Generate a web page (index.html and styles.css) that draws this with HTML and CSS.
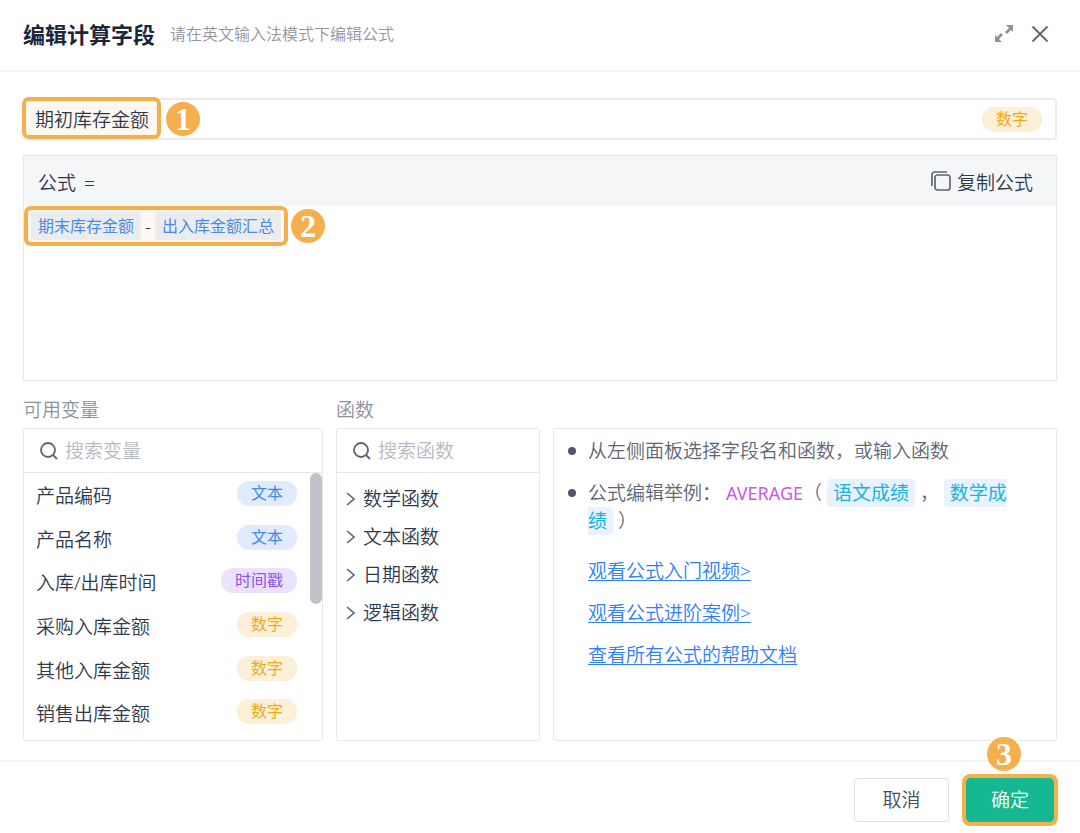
FILE: index.html
```html
<!doctype html>
<html lang="zh-CN">
  <head>
    <meta charset="UTF-8" />
    <meta name="viewport" content="width=device-width, initial-scale=1" />
    <title>编辑计算字段</title>
    <link rel="stylesheet" href="styles.css">
  </head>
  <body>
    <header class="header">
      <h1>编辑计算字段</h1>
      <p class="subtitle">请在英文输入法模式下编辑公式</p>
      <div class="header-actions">
        <button type="button" class="icon-btn" aria-label="全屏">
          <svg width="18" height="18" viewBox="0 0 18 18">
            <path d="M11 0h7v7l-2-2-4 4-2-2 4-4z" fill="#8d919b" />
            <path d="M7 17H0v-7l2 2 4-4 2 2-4 4z" fill="#8d919b" />
          </svg>
        </button>
        <button type="button" class="icon-btn" aria-label="关闭">
          <svg width="18" height="18" viewBox="0 0 18 18">
            <path d="M1.500 1.500l15 15M16.500 1.500l-15 15" fill="none" stroke="#5f6575" stroke-width="1.800" />
          </svg>
        </button>
      </div>
    </header>

    <main class="content">
      <div class="name-field">
        <span class="name-highlight"></span>
        <input type="text" id="field-name" class="name-input" value="期初库存金额" aria-label="字段名称" />
        <span class="badge badge-name">1</span>
        <span class="tag tag-number">数字</span>
      </div>

      <section class="formula">
        <div class="formula-head">
          <div class="formula-label"><span>公式</span><span>=</span></div>
          <button type="button" class="copy-btn">
            <svg width="20" height="20" viewBox="0 0 20 20" fill="none" stroke="#5f6575" stroke-width="1.700">
              <rect x="4" y="4" width="15" height="15" rx="2.500" />
              <path d="M1 15V3.500A2.500 2.500 0 0 1 3.500 1H16" />
            </svg>
            复制公式
          </button>
        </div>
        <div class="formula-body">
          <div class="expression">
            <span class="token">期末库存金额</span>
            <span class="operator">-</span>
            <span class="token">出入库金额汇总</span>
          </div>
          <span class="badge">2</span>
        </div>
      </section>

      <div class="columns">
        <section class="column">
          <label class="column-title" for="search-var">可用变量</label>
          <div class="panel">
            <div class="search">
              <svg width="18" height="18" viewBox="0 0 18 18" fill="none" stroke="#5f6575" stroke-width="1.800">
                <circle cx="8" cy="8" r="7" />
                <path d="M13 13l4 4" />
              </svg>
              <input type="text" id="search-var" placeholder="搜索变量" />
            </div>
            <ul class="var-list">
              <li>产品编码 <span class="tag tag-text">文本</span></li>
              <li>产品名称 <span class="tag tag-text">文本</span></li>
              <li>入库/出库时间 <span class="tag tag-time">时间戳</span></li>
              <li>采购入库金额 <span class="tag tag-number">数字</span></li>
              <li>其他入库金额 <span class="tag tag-number">数字</span></li>
              <li>销售出库金额 <span class="tag tag-number">数字</span></li>
            </ul>
          </div>
        </section>

        <section class="column">
          <label class="column-title" for="search-fn">函数</label>
          <div class="panel">
            <div class="search">
              <svg width="18" height="18" viewBox="0 0 18 18" fill="none" stroke="#5f6575" stroke-width="1.800">
                <circle cx="8" cy="8" r="7" />
                <path d="M13 13l4 4" />
              </svg>
              <input type="text" id="search-fn" placeholder="搜索函数" />
            </div>
            <ul class="fn-list">
              <li><svg width="9" height="14" viewBox="0 0 9 14"><path d="M1 1l7 6-7 6" /></svg>数学函数</li>
              <li><svg width="9" height="14" viewBox="0 0 9 14"><path d="M1 1l7 6-7 6" /></svg>文本函数</li>
              <li><svg width="9" height="14" viewBox="0 0 9 14"><path d="M1 1l7 6-7 6" /></svg>日期函数</li>
              <li><svg width="9" height="14" viewBox="0 0 9 14"><path d="M1 1l7 6-7 6" /></svg>逻辑函数</li>
            </ul>
          </div>
        </section>

        <section class="column column-help">
          <div class="panel help">
            <ul>
              <li>从左侧面板选择字段名和函数，或输入函数</li>
              <li>公式编辑举例： <span class="fn-name">AVERAGE</span>（ <span class="arg">语文成绩</span> ， <span class="arg">数学成绩</span> ）</li>
            </ul>
            <nav class="help-links">
              <a href="#">观看公式入门视频&gt;</a>
              <a href="#">观看公式进阶案例&gt;</a>
              <a href="#">查看所有公式的帮助文档</a>
            </nav>
          </div>
        </section>
      </div>
    </main>

    <footer class="footer">
      <button type="button" class="btn">取消</button>
      <div class="confirm">
        <button type="submit" class="btn btn-primary">确定</button>
        <span class="badge badge-confirm">3</span>
      </div>
    </footer>
  </body>
</html>
```
FILE: styles.css
```css
* {
  box-sizing: border-box;
}
body {
  display: flex;
  flex-direction: column;
  min-height: 100vh;
  margin: 0;
  background-color: #fff;
  color: #2f394d;
  font-family: 'Noto Sans', 'Noto Sans CJK SC', sans-serif;
  font-size: 19px;
  font-weight: 350;
  line-height: 28px;
}
ul {
  list-style: none;
  margin: 0;
  padding: 0;
}
input,
button {
  font: inherit;
  color: inherit;
  background: none;
  border: none;
  padding: 0;
}
button {
  cursor: pointer;
}
svg {
  display: block;
  flex: none;
}

/* header */
.header {
  display: flex;
  align-items: center;
  height: 72px;
  padding: 0 31px 3px 23px;
  border-bottom: 2px solid #f4f5f6;
}
h1 {
  margin: 0;
  color: #1c263b;
  font-size: 22px;
  font-weight: 700;
}
.subtitle {
  margin: 0 0 0 15px;
  color: #92969f;
  font-size: 16px;
}
.header-actions {
  display: flex;
  gap: 18px;
  margin-left: auto;
}

/* body */
.content {
  display: flex;
  flex: 1;
  flex-direction: column;
  padding: 26px 23px 19px;
}
.name-field {
  position: relative;
  display: flex;
  align-items: center;
  height: 42px;
  padding: 0 13px 0 10px;
  border: 2px solid #ececee;
  border-radius: 4px;
}
.name-highlight {
  position: absolute;
  top: -3px;
  left: -3px;
  width: 139px;
  height: 42px;
  background-color: #fff8f0;
  border: 4px solid #f5b04d;
  border-radius: 7px;
}
.name-input {
  position: relative;
  flex: 1;
  min-width: 0;
  padding-top: 2px;
  outline: none;
}
.badge {
  width: 34px;
  height: 34px;
  flex: none;
  border-radius: 50%;
  background-color: #f5b04d;
  color: #fff;
  font-family: 'Liberation Serif', serif;
  font-size: 32px;
  font-weight: 700;
  line-height: 34px;
  text-align: center;
}
.badge-name {
  position: absolute;
  top: 2px;
  left: 141px;
}
.tag {
  padding: 0 14px;
  border-radius: 12px;
  font-size: 16px;
  font-weight: 400;
  line-height: 25px;
}
.tag-number {
  background-color: #fdf0d9;
  color: #f0ab12;
}
.tag-text {
  background-color: #e0ecfd;
  color: #3f8af2;
}
.tag-time {
  background-color: #ebe2fd;
  color: #8d55ee;
}

.formula {
  margin-top: 15px;
  border: 1px solid #e7e8ea;
}
.formula-head {
  display: flex;
  align-items: center;
  justify-content: space-between;
  height: 50px;
  padding: 4px 23px 0 14px;
  background-color: #f4f6f8;
}
.formula-label {
  display: flex;
  gap: 8px;
}
.copy-btn {
  display: flex;
  align-items: center;
  gap: 6px;
}
.copy-btn svg {
  margin-bottom: 4px;
}
.formula-body {
  display: flex;
  align-items: flex-start;
  gap: 3px;
  min-height: 174px;
}
.expression {
  display: flex;
  align-items: center;
  height: 40px;
  padding: 0 3px;
  background-color: #fff8f0;
  border: 4px solid #f5b04d;
  border-radius: 7px;
}
.token {
  padding: 0 7px;
  border-radius: 3px;
  background-color: #ebecee;
  color: #4a8ae8;
  font-size: 16px;
  font-weight: 400;
}
.operator {
  width: 14px;
  text-align: center;
}
.formula-body .badge {
  margin-top: 3px;
}

/* columns */
.columns {
  display: grid;
  flex: 1;
  grid-template-columns: minmax(0, 300fr) minmax(0, 204fr) minmax(0, 504fr);
  gap: 13px;
  margin-top: 15px;
}
.column {
  display: flex;
  flex-direction: column;
}
.column-title {
  height: 32px;
  color: #8d919b;
}
.column-help {
  padding-top: 32px;
}
.panel {
  flex: 1;
  display: flex;
  flex-direction: column;
  border: 1px solid #e7e8ea;
  border-radius: 3px;
}
.search {
  display: flex;
  align-items: center;
  gap: 7px;
  height: 44px;
  padding: 0 16px;
  border-bottom: 1px solid #e4e6e9;
}
.search input {
  flex: 1;
  min-width: 0;
  outline: none;
}
.search input::placeholder {
  color: #b7bac1;
  opacity: 1;
}
.var-list {
  position: relative;
  display: flex;
  flex: 1;
  flex-direction: column;
  padding: 1px 0 4px;
}
.var-list::after {
  content: '';
  position: absolute;
  top: 0;
  right: 0;
  width: 12px;
  height: 131px;
  border-radius: 6px;
  background-color: #c1c2c7;
}
.var-list li {
  display: flex;
  flex: 1;
  align-items: center;
  justify-content: space-between;
  padding: 0 25px 0 12px;
}
.var-list .tag {
  margin-bottom: 5px;
}
.fn-list {
  padding-top: 7px;
}
.fn-list li {
  display: flex;
  align-items: center;
  gap: 8px;
  height: 38px;
  padding-left: 9px;
}
.fn-list path {
  fill: none;
  stroke: #5f6575;
  stroke-width: 1.6;
}

.help {
  padding: 8px 40px 7px 34px;
  color: #5f6575;
}
.help li {
  position: relative;
  margin-bottom: 14px;
}
.help li::before {
  content: '';
  position: absolute;
  top: 10px;
  left: -20px;
  width: 8px;
  height: 8px;
  border-radius: 50%;
  background-color: #505868;
}
.fn-name {
  color: #cf56ea;
  font-size: 18px;
  font-weight: 400;
}
.arg {
  padding: 1px 6px;
  border-radius: 4px;
  background-color: #e9f2fe;
  color: #17b4dc;
  font-weight: 400;
}
.help-links {
  display: flex;
  flex-direction: column;
  align-items: flex-start;
  gap: 14px;
  margin-top: 8px;
}
.help-links a {
  color: #3080f5;
  text-underline-offset: 2px;
}

/* footer */
.footer {
  display: flex;
  justify-content: flex-end;
  gap: 17px;
  padding: 16px 26px 11px;
  border-top: 2px solid #f4f5f6;
}
.btn {
  width: 95px;
  height: 44px;
  border: 1px solid #dfe1e4;
  border-radius: 4px;
  color: #434b5c;
}
.confirm {
  position: relative;
}
.btn-primary {
  width: 88px;
  border: none;
  background-color: #16b892;
  color: #fff;
  outline: 4px solid #f5b04d;
}
.badge-confirm {
  position: absolute;
  top: -41px;
  left: 21px;
}
```
